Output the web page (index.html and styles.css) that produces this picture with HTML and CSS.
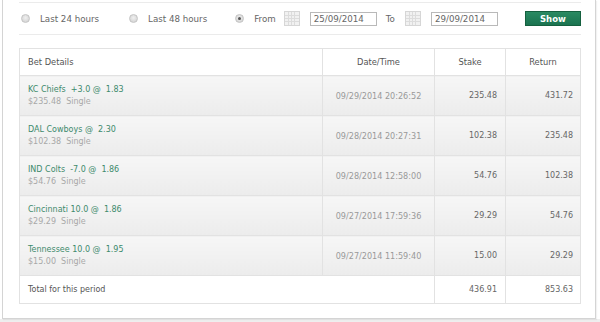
FILE: index.html
```html
<!DOCTYPE html>
<html>
<head>
<meta charset="utf-8">
<link rel="stylesheet" href="styles.css">
</head>
<body>
<div class="panel">
  <div class="filters">
    <label class="opt opt-24"><span class="radio"></span><span class="opt-text">Last 24 hours</span></label>
    <label class="opt opt-48"><span class="radio"></span><span class="opt-text">Last 48 hours</span></label>
    <label class="opt opt-from"><span class="radio checked"></span><span class="opt-text">From</span></label>
    <span class="cal cal-from"></span>
    <span class="date-input">25/09/2014</span>
    <span class="to">To</span>
    <span class="cal"></span>
    <span class="date-input">29/09/2014</span>
    <button class="show">Show</button>
  </div>
  <table class="bets">
    <colgroup>
      <col class="c1"><col class="c2"><col class="c3"><col class="c4">
    </colgroup>
    <thead>
      <tr>
        <th class="h-details">Bet Details</th>
        <th>Date/Time</th>
        <th>Stake</th>
        <th>Return</th>
      </tr>
    </thead>
    <tbody>
      <tr class="bet">
        <td class="details"><div class="sel">KC Chiefs&nbsp; +3.0 @&nbsp; 1.83</div><div class="sub">$235.48&nbsp; Single</div></td>
        <td class="dt">09/29/2014 20:26:52</td>
        <td class="stake">235.48</td>
        <td class="ret">431.72</td>
      </tr>
      <tr class="bet">
        <td class="details"><div class="sel">DAL Cowboys @&nbsp; 2.30</div><div class="sub">$102.38&nbsp; Single</div></td>
        <td class="dt">09/28/2014 20:27:31</td>
        <td class="stake">102.38</td>
        <td class="ret">235.48</td>
      </tr>
      <tr class="bet">
        <td class="details"><div class="sel">IND Colts&nbsp; -7.0 @&nbsp; 1.86</div><div class="sub">$54.76&nbsp; Single</div></td>
        <td class="dt">09/28/2014 12:58:00</td>
        <td class="stake">54.76</td>
        <td class="ret">102.38</td>
      </tr>
      <tr class="bet">
        <td class="details"><div class="sel">Cincinnati 10.0 @&nbsp; 1.86</div><div class="sub">$29.29&nbsp; Single</div></td>
        <td class="dt">09/27/2014 17:59:36</td>
        <td class="stake">29.29</td>
        <td class="ret">54.76</td>
      </tr>
      <tr class="bet">
        <td class="details"><div class="sel">Tennessee 10.0 @&nbsp; 1.95</div><div class="sub">$15.00&nbsp; Single</div></td>
        <td class="dt">09/27/2014 11:59:40</td>
        <td class="stake">15.00</td>
        <td class="ret">29.29</td>
      </tr>
    </tbody>
    <tfoot>
      <tr class="total">
        <td colspan="2" class="total-label">Total for this period</td>
        <td class="stake">436.91</td>
        <td class="ret">853.63</td>
      </tr>
    </tfoot>
  </table>
</div>
</body>
</html>
```
FILE: styles.css
```css
html, body {
  margin: 0;
  padding: 0;
  background: #ffffff;
}
body {
  font-family: "DejaVu Sans", Verdana, sans-serif;
  color: #555;
  height: 322px;
  overflow: hidden;
  background: linear-gradient(#ffffff 0, #ffffff 319px, #eeeeee 319px);
}
.panel {
  margin: 0 4px 0 2px;
  border: 1px solid #d4d4d4;
  border-top: none;
  background: #fff;
  padding: 2px 14px 14px 16px;
  box-shadow: 1px 1px 1px rgba(0,0,0,0.05);
}
.filters {
  display: flex;
  align-items: center;
  height: 31px;
  border-top: 1px solid #ebebeb;
  border-bottom: 1px solid #ebebeb;
  font-size: 8.7px;
  color: #666;
}
.opt {
  display: flex;
  align-items: center;
}
.opt-24 { margin-left: 2px; margin-right: 30px; }
.opt-48 { margin-right: 28px; }
.opt-from { margin-right: 8px; }
.radio {
  width: 9px;
  height: 9px;
  box-sizing: border-box;
  border-radius: 50%;
  border: 1px solid #c4c4c4;
  background: radial-gradient(circle at 50% 40%, #f0f0f0 0, #d8d8d8 70%);
  margin-right: 10px;
  position: relative;
}
.radio.checked::after {
  content: "";
  position: absolute;
  left: 2px;
  top: 2px;
  width: 3px;
  height: 3px;
  border-radius: 50%;
  background: #555;
}
.cal {
  width: 16px;
  height: 15px;
  box-sizing: border-box;
  border: 1px solid #d6d6d6;
  background-color: #f1f1f1;
  background-image:
    linear-gradient(90deg, transparent 3px, #dcdcdc 3px, #dcdcdc 4px, transparent 4px, transparent 6px, #dcdcdc 6px, #dcdcdc 7px, transparent 7px, transparent 9px, #dcdcdc 9px, #dcdcdc 10px, transparent 10px),
    linear-gradient(transparent 3px, #dcdcdc 3px, #dcdcdc 4px, transparent 4px, transparent 6px, #dcdcdc 6px, #dcdcdc 7px, transparent 7px, transparent 9px, #dcdcdc 9px, #dcdcdc 10px, transparent 10px);
  margin-right: 10px;
}
.date-input {
  width: 67px;
  height: 14px;
  box-sizing: border-box;
  border: 1px solid #b9b9b9;
  background: #fff;
  padding-left: 3px;
  line-height: 12px;
  color: #666;
}
.to { margin: 0 10px 0 9px; }
.show {
  margin-left: 27px;
  width: 56px;
  height: 15px;
  box-sizing: border-box;
  border: 1px solid #15603f;
  background: linear-gradient(#2a8a62, #1b7350);
  color: #fff;
  font-family: "DejaVu Sans", Verdana, sans-serif;
  font-weight: bold;
  font-size: 8.5px;
  padding: 0;
  line-height: 12px;
}
.bets {
  margin-top: 13px;
  width: 561px;
  border-collapse: collapse;
  table-layout: fixed;
  border: 1px solid #e2e2e2;
  font-size: 8px;
}
.c1 { width: 303px; }
.c2 { width: 112px; }
.c3 { width: 71px; }
.c4 { width: 75px; }
.bets th {
  height: 26px;
  font-weight: normal;
  color: #555;
  font-size: 8.3px;
  text-align: center;
  border: 1px solid #e2e2e2;
  padding: 0;
}
.bets th.h-details {
  text-align: left;
  padding-left: 8px;
}
.bets td {
  border: 1px solid #e2e2e2;
  padding: 0;
}
.bet td {
  height: 39px;
  background: linear-gradient(#f6f6f6, #ececec);
}
.details { padding-left: 8px !important; }
.sel {
  color: #3d8a6c;
  line-height: 12px;
}
.sub {
  color: #a8a8a8;
  line-height: 12px;
}
.dt {
  text-align: center;
  color: #999;
  font-size: 8.1px;
}
.stake, .ret {
  text-align: right;
  color: #666;
}
.stake { padding-right: 8px !important; }
.ret { padding-right: 7px !important; }
.total td {
  height: 27px;
  background: #fff;
}
.total-label {
  padding-left: 8px !important;
  color: #555;
}
```
